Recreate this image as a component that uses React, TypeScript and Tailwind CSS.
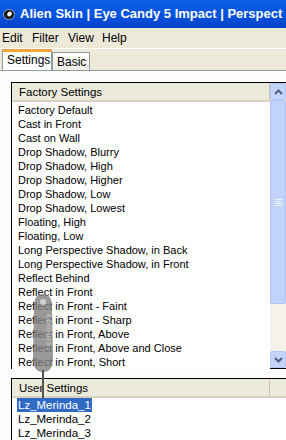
import React from 'react';

const factory = [
  'Factory Default',
  'Cast in Front',
  'Cast on Wall',
  'Drop Shadow, Blurry',
  'Drop Shadow, High',
  'Drop Shadow, Higher',
  'Drop Shadow, Low',
  'Drop Shadow, Lowest',
  'Floating, High',
  'Floating, Low',
  'Long Perspective Shadow, in Back',
  'Long Perspective Shadow, in Front',
  'Reflect Behind',
  'Reflect in Front',
  'Reflect in Front - Faint',
  'Reflect in Front - Sharp',
  'Reflect in Front, Above',
  'Reflect in Front, Above and Close',
  'Reflect in Front, Short',
];

const user = ['Lz_Merinda_1', 'Lz_Merinda_2', 'Lz_Merinda_3'];

const Chevron = ({ down }: { down?: boolean }) => (
  <svg width="9" height="6" viewBox="0 0 9 6">
    <path
      d={down ? 'M1 1 L4.5 4.5 L8 1' : 'M1 5 L4.5 1.5 L8 5'}
      fill="none"
      stroke="#4d6185"
      strokeWidth="2"
    />
  </svg>
);

const Header = ({ title }: { title: string }) => (
  <div className="flex h-[19px] bg-[#ebeadb] border-b-2 border-[#d6d2c2]">
    <div className="w-[258px] pl-[7px] leading-[18px] text-[11.5px] border-r border-[#c7c5b2]">{title}</div>
    <div className="flex-1" />
  </div>
);

export default function App() {
  return (
    <div
      className="w-[286px] h-[440px] overflow-hidden relative bg-[#ece9d8] text-[11px] text-black"
      style={{ fontFamily: '"Liberation Sans", Arial, sans-serif' }}
    >
      {/* Title bar */}
      <div className="h-[28px] flex items-center gap-[5px] pl-[3px] whitespace-nowrap overflow-hidden bg-gradient-to-b from-[#0a5fe6] via-[#0553df] to-[#0343c9]">
        <div className="w-[12px] h-[11px] shrink-0 rounded-full bg-[#1a1a1a] border border-[#8fa8d8] flex items-center justify-center">
          <div className="w-[5px] h-[4px] rounded-full bg-white -rotate-45" />
        </div>
        <span className="text-white font-bold text-[13px]">Alien Skin | Eye Candy 5 Impact | Perspect</span>
      </div>

      {/* Menu */}
      <div className="h-[20px] flex items-center gap-[10px] pl-[2px] text-[12px]">
        <span className="w-[20px]">Edit</span>
        <span className="w-[26px]">Filter</span>
        <span className="w-[24px]">View</span>
        <span>Help</span>
      </div>

      {/* Tabs */}
      <div className="h-[22px] flex items-end pl-[2px] border-t border-white text-[12px]">
        <div className="w-[50px] h-[21px] bg-white border-t-[3px] border-[#f2a73e] border-x border-x-[#919b9c] pl-[4px] leading-[17px] relative z-10">
          Settings
        </div>
        <div className="w-[38px] h-[18px] bg-gradient-to-b from-white to-[#ecebe5] border border-b-0 border-[#919b9c] pl-[4px] leading-[18px]">
          Basic
        </div>
      </div>

      {/* Tab page */}
      <div className="h-[370px] bg-[#fcfcfe] border-t border-[#919b9c] pl-[11px] pt-[11px]">
        {/* Factory list */}
        <div className="h-[287px] border-t border-l border-b border-black flex">
          <div className="flex-1 flex flex-col">
            <Header title="Factory Settings" />
            <div className="bg-white flex-1 pl-[6px] pt-[1px] whitespace-nowrap">
              {factory.map((f) => (
                <div key={f} className="h-[14px] leading-[14px]">{f}</div>
              ))}
            </div>
          </div>
          <div className="w-[16px] flex flex-col bg-[#f4f2ea]">
            <div className="h-[17px] bg-[#c4d4fb] border border-[#b5c8f5] rounded-[2px] flex items-center justify-center">
              <Chevron />
            </div>
            <div className="h-[204px] bg-[#c1d3fb] border border-[#b0c5f4] rounded-[2px] flex items-center justify-center">
              <div className="flex flex-col gap-[1px]">
                <div className="w-[7px] h-[1px] bg-[#eef3fe]" />
                <div className="w-[7px] h-[1px] bg-[#eef3fe]" />
                <div className="w-[7px] h-[1px] bg-[#eef3fe]" />
                <div className="w-[7px] h-[1px] bg-[#eef3fe]" />
              </div>
            </div>
            <div className="flex-1" />
            <div className="h-[17px] bg-[#c4d4fb] border border-[#b5c8f5] rounded-[2px] flex items-center justify-center">
              <Chevron down />
            </div>
          </div>
        </div>

        {/* User list */}
        <div className="mt-[9px] h-[70px] border-t border-l border-black flex flex-col">
          <Header title="User Settings" />
          <div className="bg-white flex-1 pl-[5px] whitespace-nowrap text-[11.5px]">
            {user.map((u, i) => (
              <div key={u} className="h-[14px] leading-[14px]">
                <span className={i === 0 ? 'bg-[#316ac5] text-white px-[1px] inline-block w-[75px]' : 'px-[1px]'}>{u}</span>
              </div>
            ))}
          </div>
        </div>
      </div>

      {/* Watermark tag */}
      <svg className="absolute left-[26px] top-[292px]" width="34" height="110" viewBox="0 0 34 110">
        <path d="M8 14 Q8 2 17 2 Q26 2 26 14 L27 66 Q27 80 17 80 Q7 80 7 66 Z" fill="#808080" opacity="0.8" />
        <path d="M17 78 L17 106" stroke="#555" strokeWidth="2" />
        <circle cx="17" cy="10" r="3" fill="#cfcfcf" />
        <text x="0" y="0" fill="#b8b8b8" fontSize="9" fontWeight="bold" transform="translate(20 22) rotate(90)" style={{ fontFamily: 'Liberation Sans, sans-serif' }}>colours</text>
      </svg>
    </div>
  );
}
